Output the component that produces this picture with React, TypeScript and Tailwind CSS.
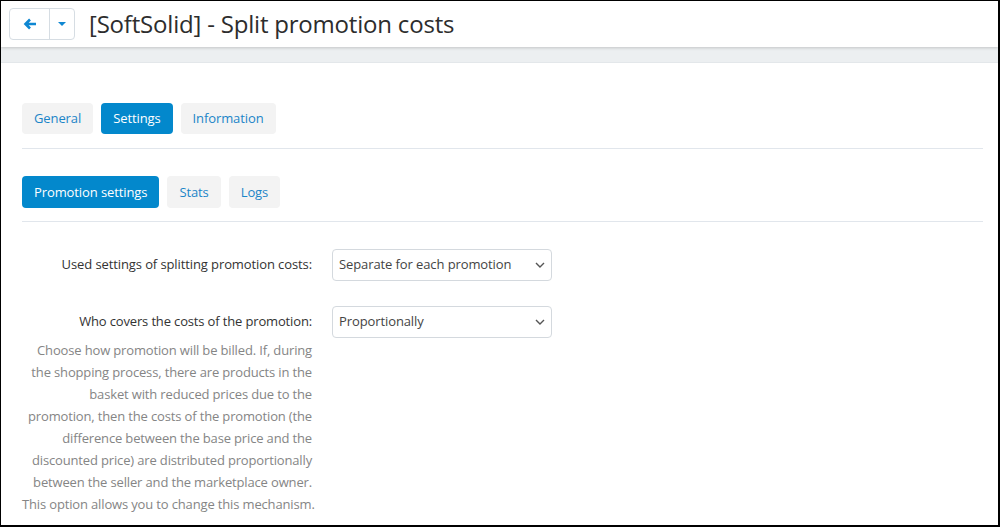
import React from "react";

const font = { fontFamily: '"Open Sans", "Noto Sans", sans-serif' };

function Chevron() {
  return (
    <svg width="10" height="6" viewBox="0 0 10 6" className="shrink-0">
      <path d="M1 1l4 4 4-4" fill="none" stroke="#555" strokeWidth="1.4" />
    </svg>
  );
}

function Select({ value }: { value: string }) {
  return (
    <div className="flex h-[32px] w-[220px] items-center justify-between rounded-[4px] border border-[#d4d9de] bg-white pl-[6px] pr-[6px] text-[13px] tracking-[-0.1px] text-[#444]">
      <span>{value}</span>
      <Chevron />
    </div>
  );
}

function Tab({ label, active }: { label: string; active?: boolean }) {
  return (
    <div
      className={
        "flex items-center rounded-[4px] px-[12px] pt-px text-[13px] tracking-[-0.1px] " +
        (active ? "bg-[#0388cc] text-white" : "bg-[#f3f3f3] text-[#1b85c8]")
      }
    >
      {label}
    </div>
  );
}

const help = [
  "Choose how promotion will be billed. If, during",
  "the shopping process, there are products in the",
  "basket with reduced prices due to the",
  "promotion, then the costs of the promotion (the",
  "difference between the base price and the",
  "discounted price) are distributed proportionally",
  "between the seller and the marketplace owner.",
  "This option allows you to change this mechanism.",
];

export default function App() {
  return (
    <div
      style={font}
      className="box-border flex h-[527px] w-[1000px] flex-col overflow-hidden border-t border-l border-r-2 border-b-2 border-black bg-white"
    >
      <div className="relative z-10 flex h-[46px] shrink-0 items-center bg-white pl-[8px] shadow-[0_1px_3px_rgba(0,0,0,0.18)]">
        <div className="flex h-[32px] w-[66px] rounded-[4px] border border-[#d6dde3] bg-white">
          <div className="flex w-[40px] items-center justify-center border-r border-[#d6dde3]">
            <svg width="14" height="12" viewBox="0 0 14 12">
              <path d="M13 6H3M7 1.5L2.5 6 7 10.5" fill="none" stroke="#0f87d2" strokeWidth="2.6" strokeLinejoin="miter" />
            </svg>
          </div>
          <div className="flex flex-1 items-center justify-center">
            <svg width="8" height="4" viewBox="0 0 8 4">
              <path d="M0 0h8L4 4z" fill="#0f87d2" />
            </svg>
          </div>
        </div>
        <div className="ml-[14px] text-[24px] leading-none tracking-[-0.2px] text-[#2d2d2d]">[SoftSolid] - Split promotion costs</div>
      </div>
      <div className="h-[16px] shrink-0 border-b border-[#e3e7ea] bg-[#eceff1]" />
      <div className="flex flex-1 flex-col pl-[21px] pr-[15px] pt-[40px]">
        <div className="flex h-[31px] gap-[8px]">
          <Tab label="General" />
          <Tab label="Settings" active />
          <Tab label="Information" />
        </div>
        <div className="mt-[14px] h-px bg-[#e1e6ec]" />
        <div className="mt-[27px] flex h-[32px] gap-[8px]">
          <Tab label="Promotion settings" active />
          <Tab label="Stats" />
          <Tab label="Logs" />
        </div>
        <div className="mt-[13px] h-px bg-[#e1e6ec]" />
        <div className="mt-[27px] flex gap-[20px]">
          <div className="flex h-[32px] w-[290px] items-center justify-end text-[13px] tracking-[-0.1px] text-[#333]">
            Used settings of splitting promotion costs:
          </div>
          <Select value="Separate for each promotion" />
        </div>
        <div className="mt-[25px] flex gap-[20px]">
          <div className="w-[290px] text-right text-[13px] tracking-[-0.15px]">
            <div className="flex h-[32px] items-center justify-end text-[#333]">Who covers the costs of the promotion:</div>
            <div className="mt-[1px] leading-[22px] text-[#858585]">
              {help.map((l) => (
                <div key={l} className="whitespace-nowrap">{l}</div>
              ))}
            </div>
          </div>
          <Select value="Proportionally" />
        </div>
      </div>
    </div>
  );
}
